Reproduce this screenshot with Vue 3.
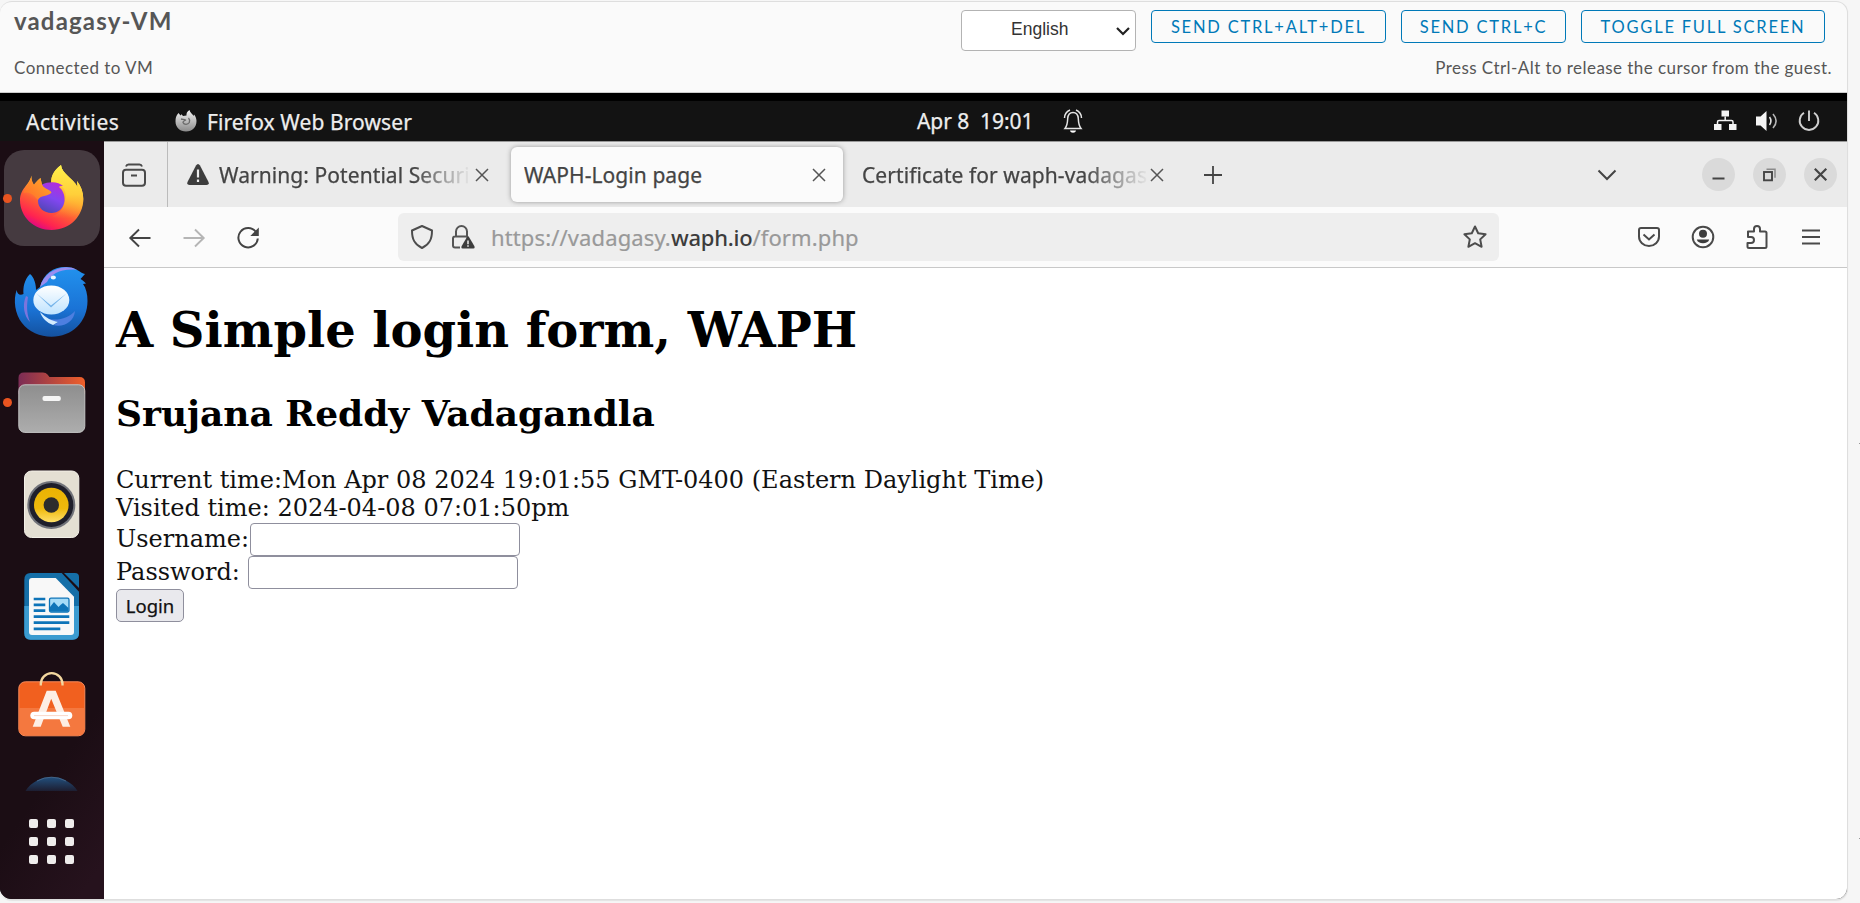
<script setup>
const apps = ['firefox', 'thunderbird', 'files', 'rhythmbox', 'writer', 'software']
</script>

<template>
  <div class="screen">
    <i class="tick tick-a"></i><i class="tick tick-b"></i>
    <main class="card">
      <header class="head">
        <div class="head-left">
          <h4 class="vm">vadagasy-VM</h4>
          <p class="note">Connected to VM</p>
        </div>
        <div class="head-right">
          <div class="controls">
            <div class="select"><span>English</span>
              <svg width="16" height="12" viewBox="0 0 16 12"><path d="M2 3l6 6 6-6" fill="none" stroke="#222" stroke-width="2.2" /></svg>
            </div>
            <button class="btn b1">SEND CTRL+ALT+DEL</button>
            <button class="btn b2">SEND CTRL+C</button>
            <button class="btn b3">TOGGLE FULL SCREEN</button>
          </div>
          <p class="note note-right">Press Ctrl-Alt to release the cursor from the guest.</p>
        </div>
      </header>

      <section class="guest">
        <div class="topbar">
          <div class="tb-left">
            <span class="activities">Activities</span>
            <svg class="ff-mono" width="24" height="24" viewBox="0 0 24 24">
              <defs><linearGradient id="gm" x1="0" y1="0" x2="0" y2="1"><stop offset="0" stop-color="#f2f2f2" /><stop offset="1" stop-color="#8b8b8b" /></linearGradient></defs>
              <path d="M4.500 4C2 7 1.500 9 1.500 12.500C1.500 18.500 6 22.500 12 22.500C18.500 22.500 22.500 18 22.500 12C22.500 9.500 21.500 7 20 5.500L19.500 7C18.500 4.500 16 4 15.500 1C13 2.500 12.300 4.500 12.500 6.500L9 7L7.500 5.300L6.500 6.500Z" fill="url(#gm)" />
              <path d="M7 10C9 10.500 10.500 10 11.500 11C10.500 12 9 12 9 13.500C10 16 14 15.800 15.300 13.500C16 11.500 15.500 10 14.500 9" fill="none" stroke="#6b6b6b" stroke-width="1.300" />
            </svg>
            <span class="appname">Firefox Web Browser</span>
          </div>
          <div class="clock">
            <span class="time">Apr 8&nbsp; 19:01</span>
            <svg width="22" height="26" viewBox="0 0 22 26" fill="none" stroke="#e4e4e4" stroke-width="1.500">
              <path d="M3 20.500C5.500 17.500 5.500 15 5.700 10.500C6 6.500 8 4.500 11 4.500S16 6.500 16.300 10.500C16.500 15 16.500 17.500 19 20.500Z" /><path d="M2.500 10C2.600 6 4.500 3.500 8 2M19.500 10C19.400 6 17.500 3.500 14 2" /><path d="M8 22.500h6c-.5 3-5.500 3-6 0z" fill="#fff" stroke="none" />
            </svg>
          </div>
          <div class="tray">
            <svg width="24" height="24" viewBox="0 0 24 24"><path d="M8.500 1.500h7.500v6h-7.500zM1 15h7.500v6H1zM16 15h7.500v6H16z" fill="#f4f4f4" /><path d="M12.200 7.500v4M4.500 15.500v-2.500c0-1 .5-1.500 1.500-1.500h12.500c1 0 1.500.5 1.500 1.500v2.500" fill="none" stroke="#f4f4f4" stroke-width="1.500" /></svg>
            <svg class="vol" width="24" height="24" viewBox="0 0 24 24"><path d="M1 7.500h4.500L11.500 2v20l-6-5.500H1z" fill="#f4f4f4" /><path d="M14.500 8c1.800 2.500 1.800 5.500 0 8" fill="none" stroke="#ddd" stroke-width="1.600" /><path d="M18 5c4 4.500 4 9.500 0 14" fill="none" stroke="#b5b5b5" stroke-width="1.600" /></svg>
            <svg width="24" height="24" viewBox="0 0 24 24" fill="none" stroke="#cfcfcf" stroke-width="1.900"><path d="M7 3.800a9.300 9.300 0 1 0 10 0M12 1.500v10.500" /></svg>
          </div>
        </div>

        <div class="desktop">
          <nav class="dock">
            <div v-for="a in apps" :key="a" class="tile" :class="{ active: a === 'firefox' }">
              <i v-if="a === 'firefox' || a === 'files'" class="running"></i>
              <svg v-if="a === 'firefox'" width="96" height="96" viewBox="0 0 96 96">
                <defs>
                  <linearGradient id="f1" x1=".75" y1=".1" x2=".3" y2="1"><stop offset="0" stop-color="#fff44f" /><stop offset=".35" stop-color="#ffb52e" /><stop offset=".62" stop-color="#ff5a36" /><stop offset=".85" stop-color="#ff2350" /><stop offset="1" stop-color="#d9058a" /></linearGradient>
                  <linearGradient id="f2" x1=".7" y1="0" x2=".3" y2="1"><stop offset="0" stop-color="#b52bdc" /><stop offset=".5" stop-color="#8146f0" /><stop offset="1" stop-color="#4f46b4" /></linearGradient>
                  <linearGradient id="f3" x1="0" y1="1" x2="1" y2="0"><stop offset="0" stop-color="#ff6a2b" /><stop offset="1" stop-color="#ffb02a" /></linearGradient>
                  <linearGradient id="f4" x1="0" y1="0" x2="0" y2="1"><stop offset="0" stop-color="#fff04a" /><stop offset=".55" stop-color="#ffcf3a" /><stop offset="1" stop-color="#ff8b30" stop-opacity="0" /></linearGradient>
                </defs>
                <path d="M27.500 25.500C26 31 24 33 21 37C17 42 16 46 16 50C16 67 30 80 47.500 80C66 80 79.300 66 79.300 49C79.300 42 77 36 73 31L73.500 37C69 28 58 24 57 15C49 21 47 27 47 33L38 35L36.500 28C33 31 31 33 30 35C28 32 27 29 27.500 25.500Z" fill="url(#f1)" />
                <path d="M57 15C49 21 47 27 47.500 32C58 34 64 40 61 50C60 60 52 66 48 66C58 72 79 68 79.300 49C79.300 42 77 36 73 31L73.500 37C69 28 58 24 57 15Z" fill="url(#f4)" />
                <path d="M38 34.500C45 31 55 31.500 59 36C56 36 55 36.500 55 37C59 40 61 45 60.500 51C59.500 59 54 63 47.500 63C40 63 34 58 34 51C34 45 37 42 41 41Z" fill="url(#f2)" />
                <path d="M27.500 25.500C26 33 21 37 19.500 43C25 41 29 44 34 50C36 45 44 47 47.500 42.500C46 39 40 39 38 35L36.500 28C33 31 31 33 30 35C28 32 27 29 27.500 25.500Z" fill="url(#f3)" />
              </svg>
              <svg v-else-if="a === 'thunderbird'" width="96" height="96" viewBox="0 0 96 96">
                <defs>
                  <linearGradient id="t1" x1="0" y1="0" x2="0" y2="1"><stop offset="0" stop-color="#2292ee" /><stop offset=".6" stop-color="#1a73d6" /><stop offset="1" stop-color="#14519f" /></linearGradient>
                  <linearGradient id="t2" x1="0" y1="0" x2="0" y2="1"><stop offset="0" stop-color="#fff" /><stop offset="1" stop-color="#bfe3ff" /></linearGradient>
                </defs>
                <path d="M26 22C20 28 19 36 19.500 42C16 44 13 42 12.700 38C9 48 11 62 18 71C25 80 36 84.700 47.500 84.700C68 84.700 83.500 70 83.500 49C83.500 42 82 36 79 32L82 31.500C80 29 78 28 76.500 27L81 22C76 21 74 16.500 65 15.300C52 13.500 40 20 36 35L32 38C32 32 30 25 26 22Z" fill="url(#t1)" />
                <path d="M36 35C39 23 50 16 62 15.300C66 15.300 70 16 73 18C58 16 47 22 43 30Z" fill="#9a8df0" />
                <path d="M22 44C18 53 20 64 26 70C22 60 23 52 24 45Z" fill="#7b75dd" />
                <path d="M42 66C52 70 65 66 71 59C70 70 59 76 49 73C52 72 53 71 54 70C49 70 45 69 42 66Z" fill="#4d7fe0" /><path d="M36 60C42 66 48 69 54 70L49 73C43 71 38 66 36 60Z" fill="#d4ecff" />
                <ellipse cx="47.300" cy="48" rx="18" ry="14.500" fill="url(#t2)" /><path d="M32 41L47 53.500L63 41L47 55.500Z" fill="#76b4ea" />
                <ellipse cx="49.300" cy="25.500" rx="2.600" ry="1.900" fill="#eaf6ff" />
              </svg>
              <svg v-else-if="a === 'files'" width="96" height="96" viewBox="0 0 96 96">
                <defs><linearGradient id="d1" x1="0" y1="0" x2="1" y2="0"><stop offset="0" stop-color="#7b2c55" /><stop offset="1" stop-color="#f0602a" /></linearGradient><linearGradient id="d2" x1="0" y1="0" x2="0" y2="1"><stop offset="0" stop-color="#8e8e8e" /><stop offset="1" stop-color="#adadad" /></linearGradient></defs>
                <path d="M14.500 40V24q0-5.500 5.500-5.500h19q3 0 4.500 2l2 2.500H75.500q5.500 0 5.500 5.500V40z" fill="url(#d1)" />
                <rect x="14.800" y="30.800" width="66" height="47.600" rx="6" fill="url(#d2)" stroke="#c4c4c4" />
                <rect x="38.500" y="42" width="18.300" height="5" rx="2" fill="#f5f5f5" />
              </svg>
              <svg v-else-if="a === 'rhythmbox'" width="96" height="96" viewBox="0 0 96 96">
                <defs><linearGradient id="r1" x1="0" y1="0" x2="0" y2="1"><stop offset="0" stop-color="#eab303" /><stop offset=".6" stop-color="#efb90c" /><stop offset="1" stop-color="#ffe06a" /></linearGradient></defs>
                <rect x="20.500" y="15" width="54.300" height="66.500" rx="7" fill="#e4dfd3" stroke="#f3f0e8" />
                <circle cx="47.300" cy="49" r="24" fill="#71737a" /><circle cx="47.300" cy="49" r="22" fill="#1f1f2b" /><circle cx="47.300" cy="49" r="17.300" fill="url(#r1)" /><circle cx="47.300" cy="49" r="7.700" fill="#2c2c2c" />
              </svg>
              <svg v-else-if="a === 'writer'" width="96" height="96" viewBox="0 0 96 96">
                <path d="M26.500 15H57.700L75 33.700V75q0 6.700-6.500 6.700h-42q-6.200 0-6.200-6.700V22q0-7 6.200-7z" fill="#156fa8" /><path d="M20.300 48H75V75q0 6.700-6.500 6.700h-42q-6.200 0-6.200-6.700z" fill="#3b9bd0" />
                <path d="M60 15h11q4 0 4 4v11z" fill="#156fa8" />
                <path d="M28 20H51.700L70 38.700V74q0 3-3 3H28q-3 0-3-3V23q0-3 3-3z" fill="#f8f8f8" />
                <path d="M29.700 41h11.600M29.700 46.800h11.600M29.700 52.700h11.600M29.700 58.700h35.600M29.700 64.700h35.600M29.700 70.800h26.600" stroke="#0e74b8" stroke-width="2.700" />
                <rect x="45.500" y="40.200" width="19.500" height="13.800" rx="1.500" fill="#a5dcf8" stroke="#0e74b8" stroke-width="1.300" /><path d="M46 53.500V49l4-5 4.500 5 2-2 2.500-2 5.500 5v3.500z" fill="#0e74b8" />
              </svg>
              <svg v-else width="96" height="96" viewBox="0 0 96 96">
                <rect x="14.800" y="21.800" width="66" height="54" rx="6.500" fill="#f1601f" stroke="#f88a5a" /><path d="M15.300 48H80.300V69q0 6.300-6.300 6.300H21.300q-6 0-6-6.300z" fill="#f4783f" />
                <path d="M36.800 25.500V24a10.700 10.700 0 0 1 21.700 0v1.500" fill="none" stroke="#f3d79f" stroke-width="2.300" />
                <path d="M42.700 30.700h9l14.600 36h-7.600l-11.500-28-10.500 28h-8z" fill="#fdeee4" />
                <rect x="26.300" y="51.700" width="42" height="7.600" rx="3.800" fill="#fff" /><path d="M30 55.600h34" stroke="#f8cdb9" stroke-width=".8" />
              </svg>
            </div>
            <div class="help">
              <svg width="96" height="29" viewBox="0 0 96 29"><defs><linearGradient id="h1" x1="0" y1="0" x2="0" y2="1"><stop offset="0" stop-color="#22507f" /><stop offset="1" stop-color="#1d1e31" /></linearGradient></defs><path d="M21.500 29A31 31 0 0 1 73.500 29Z" fill="url(#h1)" /><path d="M33 19A31 31 0 0 1 62 19" fill="none" stroke="#4b6b8b" stroke-width=".8" /></svg>
            </div>
            <div class="grid9"><i v-for="n in 9" :key="n"></i></div>
          </nav>

          <div class="browser">
            <div class="tabs">
              <div class="view">
                <svg width="26" height="26" viewBox="0 0 26 26" fill="none" stroke="#4a4a4a" stroke-width="2"><rect x="2" y="7.700" width="22" height="16" rx="3" /><path d="M5 4.500c.5-1.500 1.200-2 2.500-2h11c1.300 0 2 .5 2.500 2" /><path d="M10 13.500h6" /></svg>
              </div>
              <div class="tab tab1">
                <svg width="24" height="24" viewBox="0 0 24 24"><path d="M10 2.500q2-3 4 0l8.500 16.500q1 3-2 3h-17q-3 0-2-3z" fill="#3d3d3d" /><path d="M12 6.500v8M12 16.500v2.500" stroke="#eee" stroke-width="2.200" /></svg>
                <span class="label fade">Warning: Potential Securi</span>
                <svg class="x" width="14" height="14" viewBox="0 0 14 14"><path d="M1 1l12 12M13 1L1 13" /></svg>
              </div>
              <div class="tab tab2">
                <span class="label">WAPH-Login page</span>
                <svg class="x" width="14" height="14" viewBox="0 0 14 14"><path d="M1 1l12 12M13 1L1 13" /></svg>
              </div>
              <div class="tab tab3">
                <span class="label fade">Certificate for waph-vadagas</span>
                <svg class="x" width="14" height="14" viewBox="0 0 14 14"><path d="M1 1l12 12M13 1L1 13" /></svg>
              </div>
              <svg class="plus" width="20" height="20" viewBox="0 0 20 20"><path d="M10 1v18M1 10h18" stroke="#444" stroke-width="1.800" /></svg>
              <div class="win">
                <svg class="chev" width="20" height="12" viewBox="0 0 20 12"><path d="M1.500 1.500l8.500 8.500 8.500-8.500" fill="none" stroke="#444" stroke-width="2" /></svg>
                <span class="wb"><svg width="33" height="33" viewBox="0 0 33 33"><path d="M10.500 20.500h12" stroke="#444" stroke-width="1.800" /></svg></span>
                <span class="wb"><svg width="33" height="33" viewBox="0 0 33 33" fill="none"><path d="M13.500 11.200h8.500v8.500" stroke="#8a8a8a" stroke-width="1.500" /><rect x="11" y="14" width="8" height="8.300" stroke="#444" stroke-width="1.900" /></svg></span>
                <span class="wb"><svg width="33" height="33" viewBox="0 0 33 33"><path d="M10.800 10.800l11.500 11.500M22.300 10.800L10.800 22.300" stroke="#444" stroke-width="2.200" /></svg></span>
              </div>
            </div>

            <div class="toolbar">
              <div class="nav">
                <svg width="24" height="24" viewBox="0 0 24 24" fill="none" stroke="#444" stroke-width="1.900"><path d="M2 12h20.500M11 3.500L2.300 12l8.700 8.500" /></svg>
                <svg width="24" height="24" viewBox="0 0 24 24" fill="none" stroke="#b5b5b5" stroke-width="1.900"><path d="M22 12H1.500M13 3.500l8.700 8.500-8.700 8.500" /></svg>
                <svg width="24" height="24" viewBox="0 0 24 24" fill="none" stroke="#444" stroke-width="2"><path d="M20 6A9.700 9.700 0 1 0 21.800 12.500" /><path d="M22.800 1.500v8.500h-8.500z" fill="#444" stroke="none" /></svg>
              </div>
              <div class="urlbar">
                <svg width="24" height="26" viewBox="0 0 24 26" fill="none" stroke="#4d4d4d" stroke-width="2" stroke-linejoin="round"><path d="M12 2L2 6.500C2 15.500 4.500 20 12 24C19.500 20 22 15.500 22 6.500Z" /></svg>
                <svg class="lock" width="24" height="26" viewBox="0 0 24 26"><path d="M9 23.500H4q-2 0-2-2v-7q0-2 2-2h11q2 0 2 1.500M5 12.500V7.500a5.500 5.500 0 0 1 11 0v5" fill="none" stroke="#555" stroke-width="2" /><path d="M15.700 13.500q1.300-2 2.600 0l5 8.500q1 2.500-1 2.500H11.700q-2 0-1-2.500z" fill="#3d3d3d" /><path d="M17 16.500v3.700M17 21.300v1.500" stroke="#eee" stroke-width="1.500" /></svg>
                <span class="url">https://vadagasy.<b>waph.io</b>/form.php</span>
                <svg class="star" width="26" height="26" viewBox="0 0 26 26" fill="none" stroke="#4d4d4d" stroke-width="2" stroke-linejoin="round"><path d="M13 2.500l3.200 6.800 7.400.9-5.400 5.200 1.400 7.400L13 19.200l-6.600 3.600 1.400-7.400-5.400-5.200 7.400-.9z" /></svg>
              </div>
              <div class="tools">
                <svg width="24" height="24" viewBox="0 0 24 24" fill="none" stroke="#4a4a4a" stroke-width="2"><path d="M4 3h16q2 0 2 2v6.500a10 9.500 0 0 1-20 0V5q0-2 2-2z" /><path d="M6.500 9.500l5.500 5 5.500-5" /></svg>
                <svg width="24" height="24" viewBox="0 0 24 24"><circle cx="12" cy="12" r="10.300" fill="none" stroke="#4a4a4a" stroke-width="2" /><circle cx="12" cy="8.800" r="4" fill="#3d3d3d" /><path d="M5.800 14.500h12.400c-1 5-11.400 5-12.400 0z" fill="#3d3d3d" /></svg>
                <svg width="24" height="26" viewBox="0 0 24 26" fill="none" stroke="#4a4a4a" stroke-width="2" stroke-linejoin="round"><path d="M3 7.500h6V5a3 3 0 0 1 6 0v2.500h5q1.500 0 1.500 1.500v13.500q0 1.500-1.500 1.500H4q-1.500 0-1.500-1.500V19H6a2.700 2.700 0 0 0 0-6H3z" /></svg>
                <svg class="menu" width="20" height="20" viewBox="0 0 20 20" stroke="#4a4a4a" stroke-width="1.900"><path d="M1 3.500h18M1 10h18M1 16.500h18" /></svg>
              </div>
            </div>

            <div class="page">
              <h1>A Simple login form, WAPH</h1>
              <h2>Srujana Reddy Vadagandla</h2>
              <p class="line">Current time:Mon Apr 08 2024 19:01:55 GMT-0400 (Eastern Daylight Time)</p>
              <p class="line">Visited time: 2024-04-08 07:01:50pm</p>
              <div class="field"><label class="lu">Username:</label><input type="text" /></div>
              <div class="field"><label class="lp">Password:</label><input type="password" /></div>
              <button class="login">Login</button>
            </div>
          </div>
        </div>
      </section>
    </main>
  </div>
</template>

<style>
body { background: #f6f6f6; }
</style>

<style scoped>
* { box-sizing: border-box; margin: 0; }
svg { display: block; flex: none; }
button { padding: 0; }
.screen { position: relative; width: 1860px; height: 903px; padding-top: 1px; overflow: hidden; background: #f6f6f6; }
.tick { position: absolute; right: 0; width: 1px; height: 1px; background: #999; }
.tick-a { top: 443px; }
.tick-b { top: 838px; }
.card { width: 1848px; height: 899px; display: flex; flex-direction: column; border: 1px solid #dedede; border-left: 0; border-radius: 12px; overflow: hidden; background: #fafafa; box-shadow: 0 1px 1px #e4e4e4; }
.head { height: 91px; flex: none; display: flex; justify-content: space-between; border-bottom: 1px solid #ccc; color: #565656; font-family: Lato, sans-serif; white-space: nowrap; }
.head-left { padding-left: 14px; }
.vm { height: 50px; font-size: 24px; line-height: 37px; font-weight: 700; letter-spacing: 1.160px; }
.note { font-size: 17px; line-height: 32px; letter-spacing: .44px; }
.head-right { padding-right: 15px; }
.controls { height: 50px; padding: 8px 7px 0 0; display: flex; align-items: flex-start; justify-content: flex-end; }
.note-right { text-align: right; }
.select { width: 175px; height: 41px; margin-right: 15px; padding: 0 4px 0 49px; display: flex; align-items: center; justify-content: space-between; border: 1px solid #b3b3b3; border-radius: 4px; background: #fff; color: #333; font: 17.500px "Liberation Sans", sans-serif; }
.select span { padding-bottom: 3px; }
.btn { height: 33px; border: 1px solid #0079b8; border-radius: 4px; background: #fafafa; color: #0079b8; font: 16.500px/30px Lato, sans-serif; letter-spacing: 1.780px; text-align: center; }
.b1 { width: 235px; margin-right: 15px; }
.b2 { width: 165px; margin-right: 15px; }
.b3 { width: 244px; }

.guest { flex: 1; display: flex; flex-direction: column; padding-top: 8px; background: #000; font-family: "Noto Sans", sans-serif; white-space: nowrap; }
.topbar { height: 40px; flex: none; display: grid; grid-template-columns: 917px 167px 1fr; background: #131313; color: #eee; font-size: 21px; -webkit-text-stroke: .25px; }
.tb-left, .clock, .tray { display: flex; align-items: center; }
.activities { width: 149px; padding: 1px 0 0 26px; letter-spacing: .6px; }
.ff-mono { margin-left: 25px; }
.appname { margin-left: 9px; padding-top: 1px; letter-spacing: .1px; }
.time { width: 145px; margin-top: -1px; letter-spacing: -.05px; }
.tray { justify-content: flex-end; padding-right: 26px; gap: 18px; }
.desktop { flex: 1; display: flex; min-height: 0; }
.dock { width: 104px; padding: 9px 0 0 4px; background: linear-gradient(125deg, #1b0d14 78%, #26121d 96%); }
.tile { position: relative; width: 96px; height: 96px; margin-bottom: 6px; border-radius: 20px; }
.tile.active { background: #453a40; }
.running { position: absolute; left: -1px; top: 44px; width: 9px; height: 9px; border-radius: 50%; background: #e95420; }
.help { height: 29px; }
.grid9 { display: grid; grid-template-columns: repeat(3, 9px); gap: 9px; padding: 28px 0 0 25px; }
.grid9 i { height: 9px; border-radius: 2px; background: #efedec; }

.browser { flex: 1; display: flex; flex-direction: column; border-top: 1px solid #999; background: #fff; color: #444; }
.tabs { height: 65px; flex: none; display: flex; align-items: center; background: #ebebeb; font-size: 21px; letter-spacing: .07px; -webkit-text-stroke: .25px; }
.view { width: 64px; height: 65px; padding: 20px 0 0 17px; border-right: 1px solid #bbb; }
.tab { display: flex; align-items: center; height: 55px; }
.tab1 { width: 343px; padding-left: 18px; }
.tab1 .label { width: 250px; margin-left: 9px; }
.tab1 .x { margin-left: 6px; }
.x { margin-left: 3px; fill: none; stroke: #555; stroke-width: 1.500; }
.label { overflow: hidden; }
.fade { mask-image: linear-gradient(90deg, #000 78%, transparent 101%); }
.tab2 { width: 332px; margin-right: 1px; padding: 0 17px 0 13px; justify-content: space-between; background: #fbfbfb; border-radius: 6px; box-shadow: 0 0 5px #999; }
.tab3 { width: 320px; padding-left: 18px; }
.tab3 .label { width: 285px; }
.plus { margin-left: 39px; }
.win { display: flex; align-items: center; margin-left: auto; padding-right: 10px; }
.chev { margin-right: 85px; }
.wb { width: 33px; height: 33px; margin-left: 18px; border-radius: 50%; background: #dadada; }
.wb:nth-child(2) { margin-left: 0; }
.toolbar { height: 61px; flex: none; display: flex; align-items: center; background: #fbfbfb; border-bottom: 1px solid #c8c8c8; }
.nav { width: 294px; padding: 2px 0 0 24px; display: flex; gap: 30px; }
.urlbar { width: 1101px; height: 48px; padding: 0 11px 0 12px; display: flex; align-items: center; border-radius: 6px; background: #eee; }
.lock { margin-left: 17px; }
.url { margin-left: 16px; font-size: 22px; letter-spacing: .12px; color: #999; -webkit-text-stroke: .2px; }
.url b { font-weight: 500; letter-spacing: -.23px; color: #3c3c3c; -webkit-text-stroke: 0; }
.star { margin-left: auto; }
.tools { margin-left: auto; padding-right: 26px; display: flex; align-items: center; gap: 30px; }
.menu { margin-left: 2px; }

.page { padding: 34px 0 0 12px; color: #000; font-family: "DejaVu Serif", serif; }
h1 { font-size: 48px; line-height: 56px; letter-spacing: -.04px; }
h2 { margin-top: 34px; font-size: 36px; line-height: 42px; letter-spacing: -.03px; }
.line { font-size: 24px; line-height: 28.500px; color: #111; }
h2 + .line { margin-top: 32px; line-height: 28px; }
.field { height: 33px; display: flex; align-items: center; font-size: 24px; line-height: 30px; color: #111; }
.field label { padding-bottom: 1px; }
.lu { width: 134px; }
.lp { width: 132px; }
input { width: 270px; height: 33px; border: 1.500px solid #8f8f9d; border-radius: 4px; background: #fff; }
.login { width: 68px; height: 33px; border: 1.500px solid #8f8f9d; border-radius: 5px; background: #e9e9ed; color: #111; font: 18.500px "Noto Sans", sans-serif; -webkit-text-stroke: .25px; }
</style>
